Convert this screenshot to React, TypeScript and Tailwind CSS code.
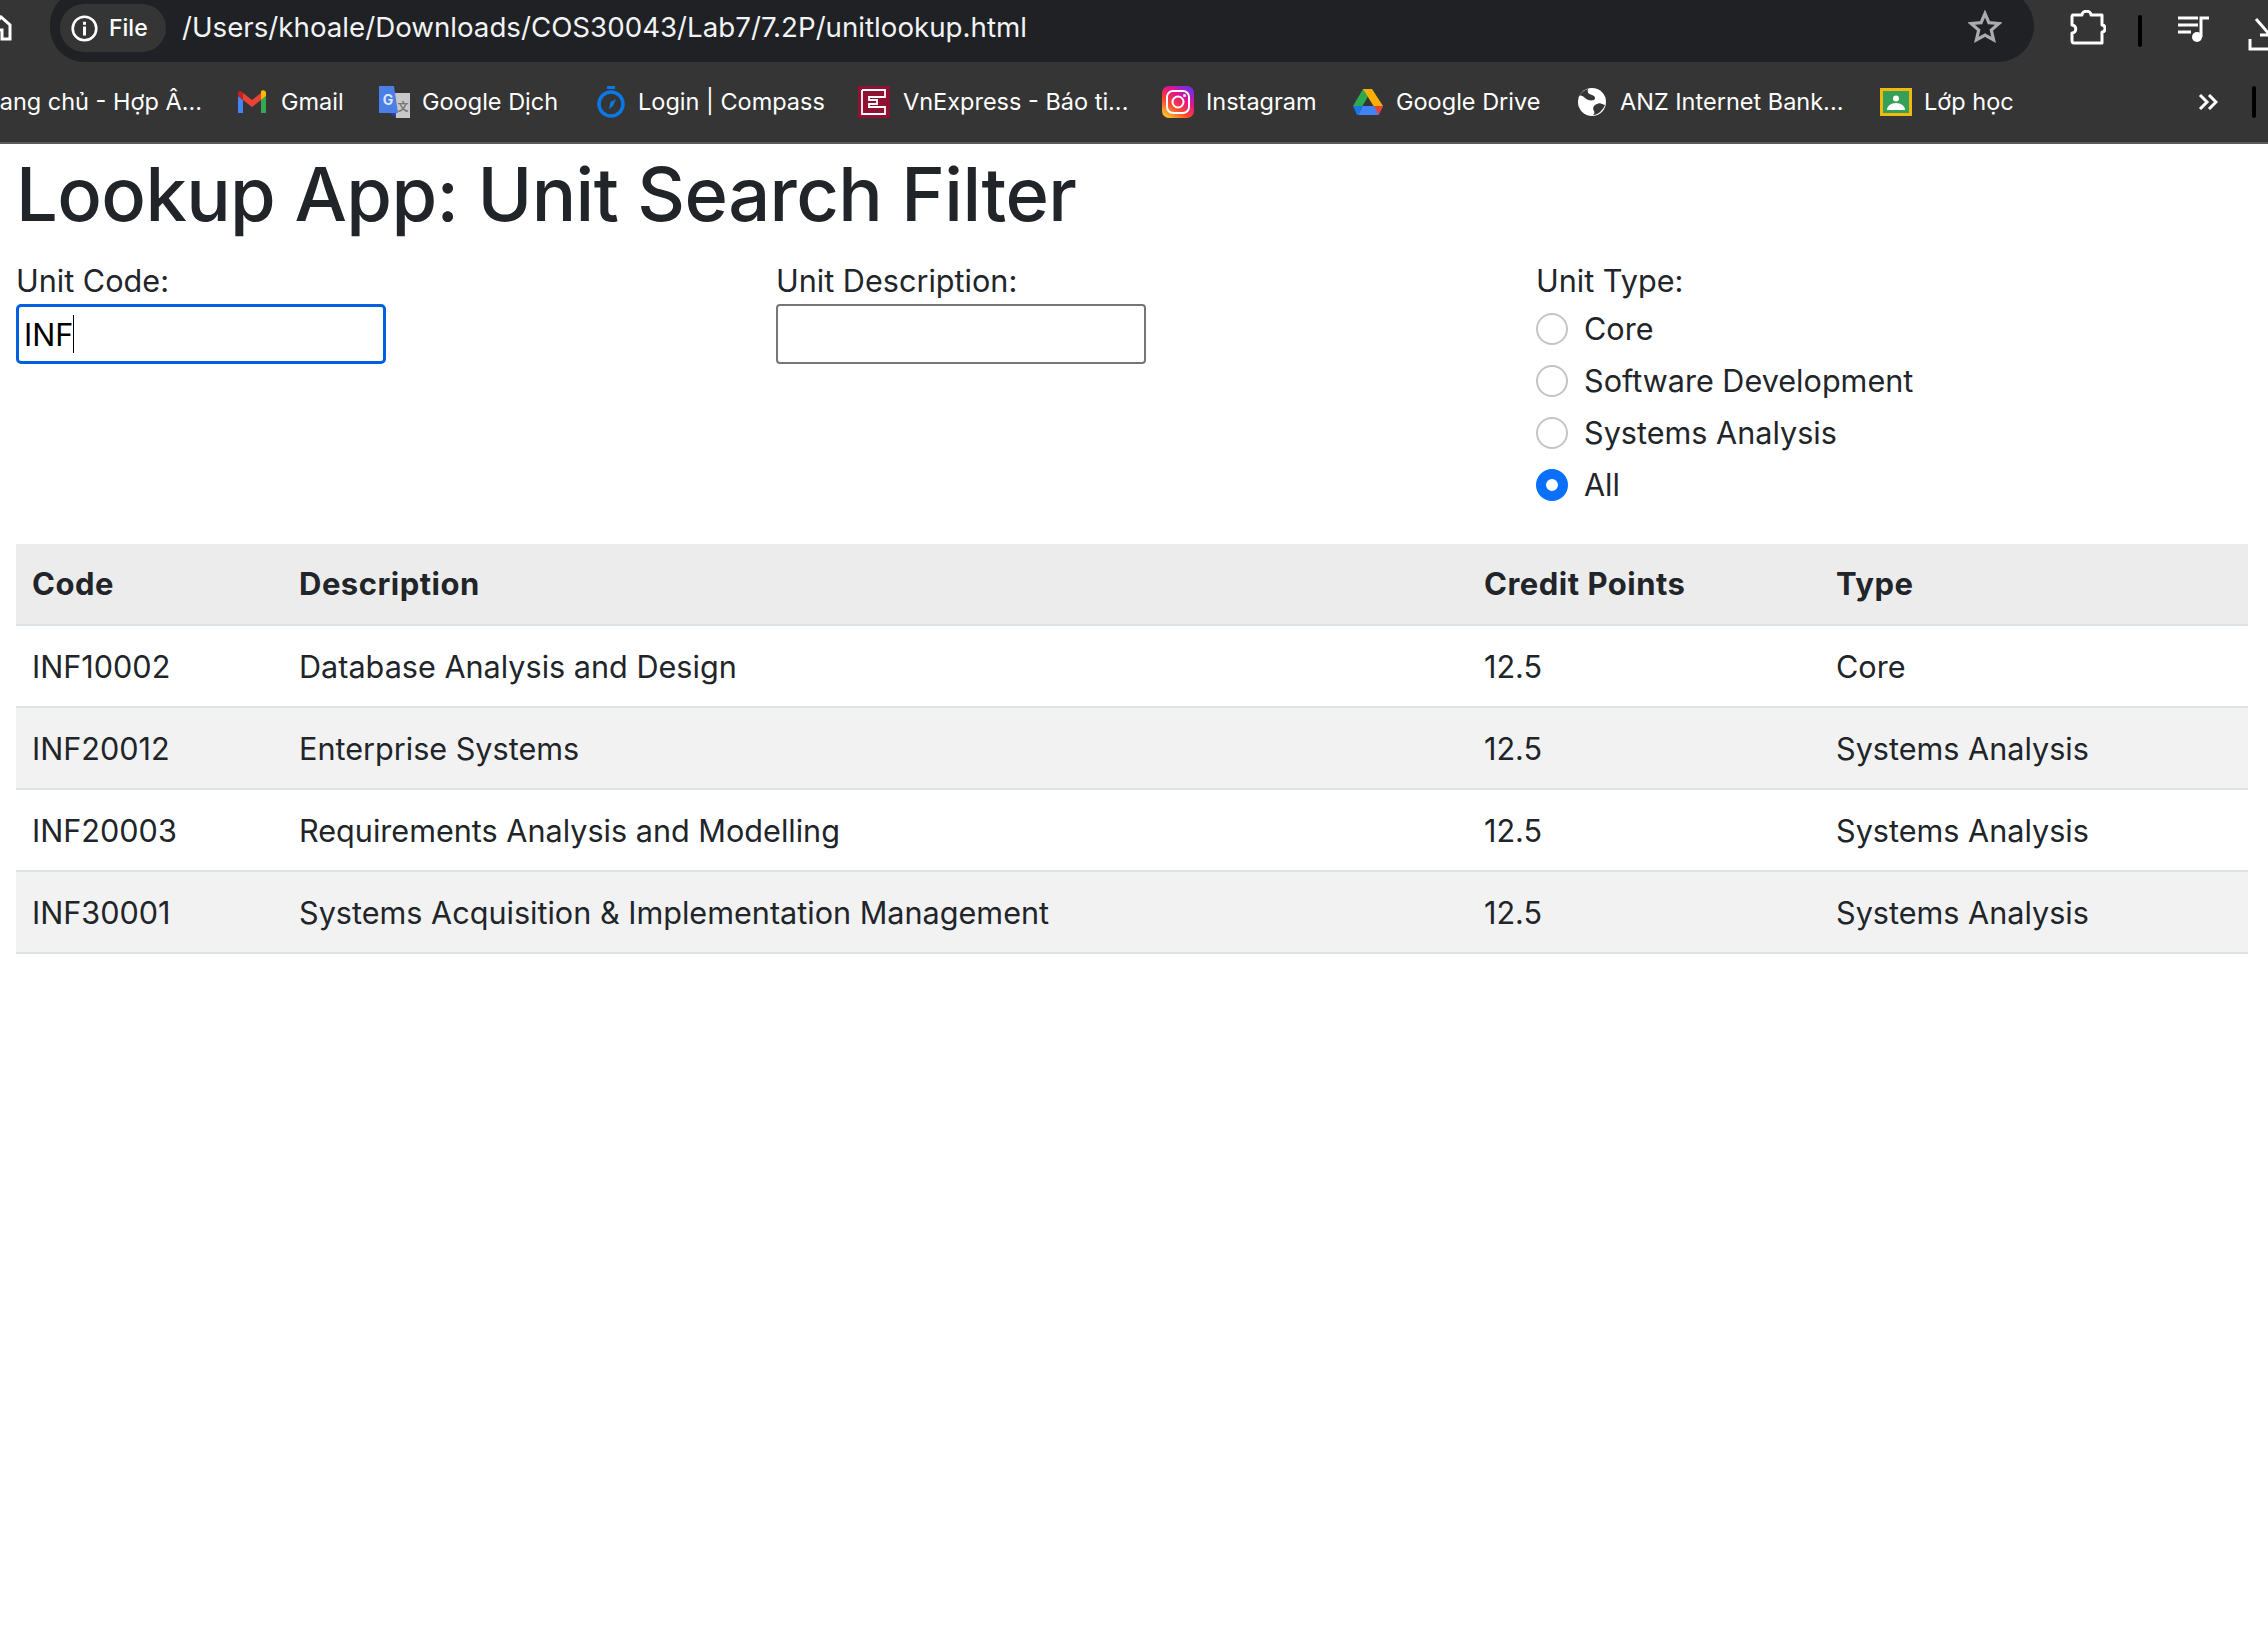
import React from "react";

const Gmail = () => (
  <svg width="32" height="26" viewBox="0 0 32 26" className="shrink-0">
    <path d="M2 24h5V11L2 7z" fill="#4285f4" />
    <path d="M25 24h5V7l-5 4z" fill="#34a853" />
    <path d="M25 4v7l5-4V4c0-2.500-3-3.500-5-2z" fill="#fbbc04" />
    <path d="M7 11V4l9 7 9-7v7l-9 7z" fill="#ea4335" />
    <path d="M2 4v3l5 4V4L6 3C4.500 1 2 2 2 4z" fill="#c5221f" />
  </svg>
);
const Translate = () => (
  <svg width="34" height="34" viewBox="0 0 34 34" className="shrink-0">
    <path d="M15 8h17v25H18z" fill="#c8c8c8" />
    <path d="M12 28l6 5v-5z" fill="#2a3fa8" />
    <path d="M1 1h15l4 27H1z" fill="#4a7fe6" />
    <text x="10" y="20" fontSize="14" fontWeight="700" fill="#dfe8fb" textAnchor="middle" fontFamily="Inter, sans-serif">G</text>
    <text x="25" y="26" fontSize="11" fontWeight="700" fill="#777" textAnchor="middle" fontFamily="'Noto Sans CJK SC', sans-serif">文</text>
  </svg>
);
const Compass = () => (
  <svg width="30" height="34" viewBox="0 0 30 34" className="shrink-0">
    <rect x="11" y="1" width="8" height="3" fill="#0a78e6" />
    <circle cx="15" cy="19" r="12" fill="none" stroke="#0a78e6" strokeWidth="3.500" />
    <path d="M20 14l-3 7-4 3 1.500-7z" fill="#0a78e6" />
  </svg>
);
const VnExpress = () => (
  <svg width="32" height="32" viewBox="0 0 32 32" className="shrink-0">
    <rect width="32" height="32" fill="#8f1232" />
    <path d="M4 4h23v7h-6M4 4v24h23v-7h-6M21 11h-10v3h8v4h-8v3h10" fill="none" stroke="#fff" strokeWidth="1.800" />
  </svg>
);
const Instagram = () => (
  <svg width="32" height="32" viewBox="0 0 32 32" className="shrink-0">
    <defs>
      <linearGradient id="ig" x1="0.150" y1="1" x2="0.850" y2="0">
        <stop offset="0" stopColor="#fdc830" />
        <stop offset="0.350" stopColor="#f9462f" />
        <stop offset="0.650" stopColor="#e4128b" />
        <stop offset="1" stopColor="#6a2ff0" />
      </linearGradient>
    </defs>
    <rect width="32" height="32" rx="7" fill="url(#ig)" />
    <rect x="5" y="5" width="22" height="22" rx="6" fill="none" stroke="#fff" strokeWidth="2" />
    <circle cx="16" cy="16" r="5.500" fill="none" stroke="#fff" strokeWidth="2" />
    <circle cx="22.500" cy="9.500" r="1.500" fill="#fff" />
  </svg>
);
const Drive = () => (
  <svg width="30" height="27" viewBox="0 0 30 27" className="shrink-0">
    <path d="M10 0h9l-9.500 17H0z" fill="#2da94f" />
    <path d="M10 0h9l11 17h-9.500z" fill="#fbaf04" />
    <path d="M0 17h9.500l-4 9H4z" fill="#1a73e8" />
    <path d="M9.500 17H30l-4.500 9H5.500z" fill="#3f83f5" />
    <path d="M21 17h9l-4.500 9z" fill="#ea4335" />
  </svg>
);
const Globe = () => (
  <svg width="28" height="28" viewBox="0 0 28 28" className="shrink-0">
    <circle cx="14" cy="14" r="14" fill="#fff" />
    <path d="M10 1c-1 4 1 5 4 6 3 1 4 3 2 5-3 1-7 0-9-2-2-2-4-3-6-2C3 5 6 2 10 1zM27 17c-3-1-5-3-8-1-3 1-5 4-3 7 1 2 0 3-1 4 5 0 10-5 12-10z" fill="#353535" />
  </svg>
);
const Classroom = () => (
  <svg width="32" height="28" viewBox="0 0 32 28" className="shrink-0">
    <rect width="32" height="28" fill="#f2b90f" />
    <rect x="3" y="3" width="26" height="22" fill="#34a05a" />
    <circle cx="16" cy="10.500" r="3" fill="#fff" />
    <path d="M7 22c0-4 4-7 9-7s9 3 9 7z" fill="#fff" />
  </svg>
);

const bookmarks: [string, string, React.ReactNode][] = [
  ["w-[142px] gap-[13px]", "Gmail", <Gmail />],
  ["w-[218px] gap-[10px]", "Google Dịch", <Translate />],
  ["w-[262px] gap-[12px]", "Login | Compass", <Compass />],
  ["w-[304px] gap-[13px]", "VnExpress - Báo ti...", <VnExpress />],
  ["w-[191px] gap-[12px]", "Instagram", <Instagram />],
  ["w-[225px] gap-[13px]", "Google Drive", <Drive />],
  ["w-[302px] gap-[14px]", "ANZ Internet Bank...", <Globe />],
  ["w-[318px] gap-[12px]", "Lớp học", <Classroom />],
];

const rows = [
  ["INF10002", "Database Analysis and Design", "12.5", "Core"],
  ["INF20012", "Enterprise Systems", "12.5", "Systems Analysis"],
  ["INF20003", "Requirements Analysis and Modelling", "12.5", "Systems Analysis"],
  ["INF30001", "Systems Acquisition & Implementation Management", "12.5", "Systems Analysis"],
];

const radios = ["Core", "Software Development", "Systems Analysis", "All"];

export default function App() {
  return (
    <div className="min-h-[1642px] bg-white text-[#212529] font-['Inter','Liberation_Sans',sans-serif] text-[30.6px] overflow-hidden">
      <header className="h-[144px] bg-[#353535] border-b-2 border-[#5a5a5a] text-white overflow-hidden">
        <div className="h-[62px] flex items-center relative">
          <svg width="12" height="26" viewBox="0 0 12 26" className="absolute left-0 top-[15px]">
            <path d="M-6 10L1 2l9 8v14H2v-9H-6" fill="none" stroke="#fff" strokeWidth="3" />
          </svg>
          <div className="ml-[50px] w-[1984px] shrink-0 h-[72px] -mt-[10px] pt-[10px] bg-[#202124] rounded-r-[42px] rounded-l-[40px] flex items-center pl-[10px] pr-[32px]">
            <div className="h-[48px] w-[106px] mt-[-6px] bg-[#353535] rounded-full flex items-center pl-[11px] gap-[11px] shrink-0">
              <svg width="27" height="27" viewBox="0 0 27 27">
                <circle cx="13.500" cy="13.500" r="11.800" fill="none" stroke="#fff" strokeWidth="2.600" />
                <rect x="12" y="11.500" width="3" height="9" fill="#fff" />
                <rect x="12" y="6.800" width="3" height="3" fill="#fff" />
              </svg>
              <span className="text-[23px] font-medium">File</span>
            </div>
            <span className="ml-[16px] mt-[-6px] text-[27.7px] whitespace-nowrap text-[#f1f3f4]">/Users/khoale/Downloads/COS30043/Lab7/7.2P/unitlookup.html</span>
            <svg width="34" height="34" viewBox="0 0 34 34" className="ml-auto mt-[-8px]">
              <path d="M17 3.500l3.900 9.200 10 .8-7.600 6.500 2.300 9.800L17 25.100 8.400 29.800l2.300-9.800L3.100 13.500l10-.8z" fill="none" stroke="#a9abae" strokeWidth="3.200" />
            </svg>
          </div>
          <svg width="36" height="36" viewBox="0 0 36 36" className="ml-[36px] -mt-[6px] shrink-0">
            <path d="M3 5h9c0-5 9-5 9 0h11v10c4 0 4 7 0 7v11H4c-2 0-2-1-2-3v-7c5 0 5-8 0-8V7c0-1 0-2 1-2z" fill="none" stroke="#fff" strokeWidth="3" strokeLinejoin="round" />
          </svg>
          <div className="ml-[32px] w-[4px] h-[32px] bg-black rounded-full shrink-0" />
          <svg width="32" height="28" viewBox="0 0 32 28" className="ml-[36px] -mt-[4px] shrink-0">
            <path d="M0 3h20M0 10h20M0 17h13M23 22V3h8" fill="none" stroke="#fff" strokeWidth="3" />
            <circle cx="19" cy="22" r="5" fill="#fff" />
          </svg>
          <svg width="30" height="36" viewBox="0 0 30 36" className="ml-[38px] mt-[8px] shrink-0">
            <path d="M2 22v10h28M8 2l14 16M22 8v10H12" fill="none" stroke="#fff" strokeWidth="3" />
          </svg>
        </div>
        <div className="h-[80px] flex items-center text-[23.5px] whitespace-nowrap">
          <span className="w-[236px] shrink-0 overflow-hidden"><span className="block -ml-[23px]">Trang chủ - Hợp Â...</span></span>
          {bookmarks.map(([cls, label, icon]) => (
            <div key={label} className={`flex items-center shrink-0 ${cls}`}>
              {icon}
              <span>{label}</span>
            </div>
          ))}
          <svg width="20" height="16" viewBox="0 0 20 16" className="shrink-0">
            <path d="M2 1l7 7-7 7M11 1l7 7-7 7" fill="none" stroke="#fff" strokeWidth="3" />
          </svg>
          <div className="ml-[34px] w-[4px] h-[32px] bg-black rounded-full shrink-0" />
        </div>
      </header>

      <main className="px-[16px]">
        <h1 className="text-[74px] leading-[72px] font-medium mt-[14px] tracking-[-0.6px]">Lookup App: Unit Search Filter</h1>
        <div className="grid grid-cols-[760px_760px_1fr] mt-[34px] h-[280px]">
          <div>
            <label className="block h-[34px] leading-[34px] mb-[6px]">Unit Code:</label>
            <div className="relative w-[370px] h-[60px]">
              <input defaultValue="INF" className="w-full h-full border-[3px] border-[#0060df] rounded-[5px] px-[5px] text-black outline-none" />
              <span className="absolute left-[57px] top-[11px] w-[1px] h-[38px] bg-black" />
            </div>
          </div>
          <div>
            <label className="block h-[34px] leading-[34px] mb-[6px]">Unit Description:</label>
            <input className="block w-[370px] h-[60px] border-2 border-[#767676] rounded-[4px] px-[5px] outline-none" />
          </div>
          <div>
            <label className="block h-[34px] leading-[34px] mb-[5px]">Unit Type:</label>
            {radios.map((r) => (
              <label key={r} className="flex items-center h-[52px] gap-[16px]">
                <input type="radio" name="unit-type" defaultChecked={r === "All"} className="appearance-none w-[32px] h-[32px] rounded-full border-2 border-[#c4c4c4] checked:border-[10px] checked:border-[#0a6ffa] bg-white" />
                <span>{r}</span>
              </label>
            ))}
          </div>
        </div>
        <table className="w-[2232px] table-fixed border-separate border-spacing-0">
          <colgroup>
            <col className="w-[267px]" />
            <col className="w-[1185px]" />
            <col className="w-[352px]" />
            <col className="w-[428px]" />
          </colgroup>
          <thead>
            <tr className="bg-[#ececec]">
              {["Code", "Description", "Credit Points", "Type"].map((h) => (
                <th key={h} className="h-[82px] px-[16px] pt-[1px] text-left font-bold text-[31px] tracking-[0.5px] border-b-2 border-[#dee2e6]">{h}</th>
              ))}
            </tr>
          </thead>
          <tbody>
            {rows.map((row, i) => (
              <tr key={row[0]} className={i % 2 === 1 ? "bg-[#f2f2f2]" : "bg-white"}>
                {row.map((c, j) => (
                  <td key={j} className="h-[82px] px-[16px] pt-[2px] border-b-2 border-[#dee2e6]">{c}</td>
                ))}
              </tr>
            ))}
          </tbody>
        </table>
      </main>
    </div>
  );
}
